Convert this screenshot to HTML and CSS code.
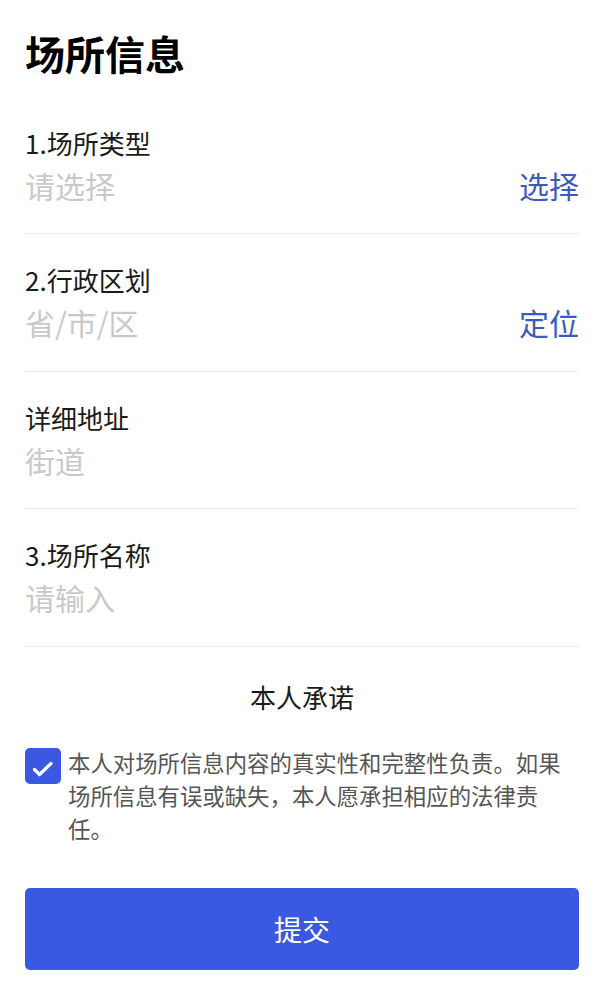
FILE: index.html
```html
<!DOCTYPE html>
<html lang="zh-CN">
<head>
    <meta charset="UTF-8">
    <meta name="viewport" content="width=device-width, initial-scale=1.0">
    <title>场所信息</title>
    <link rel="stylesheet" href="styles.css">
</head>
<body>

    <div class="page">
        <h1 class="title">场所信息</h1>

        <div class="field">
            <div class="label">1.场所类型</div>
            <div class="value">
                <span class="placeholder">请选择</span>
                <span class="action">选择</span>
            </div>
        </div>

        <div class="field">
            <div class="label">2.行政区划</div>
            <div class="value">
                <span class="placeholder">省/市/区</span>
                <span class="action">定位</span>
            </div>
        </div>

        <div class="field">
            <div class="label">详细地址</div>
            <div class="value">
                <span class="placeholder">街道</span>
            </div>
        </div>

        <div class="field">
            <div class="label">3.场所名称</div>
            <div class="value">
                <span class="placeholder">请输入</span>
            </div>
        </div>

        <div class="promise-title">本人承诺</div>

        <div class="promise">
            <span class="checkbox">
                <svg viewBox="0 0 36 36" width="36" height="36">
                    <path d="M9.5 21.5 L14.5 26.5 L26 15.5" fill="none" stroke="#fff" stroke-width="3.2" stroke-linecap="round" stroke-linejoin="round"/>
                </svg>
            </span>
            <p class="promise-text">本人对场所信息内容的真实性和完整性负责。如果场所信息有误或缺失，本人愿承担相应的法律责任。</p>
        </div>

        <button class="submit">提交</button>
    </div>

</body>
</html>
```

FILE: styles.css
```css
body { margin: 0; background: #fff; font-family: "Noto Sans CJK SC", "Noto Sans", sans-serif; color: #1a1a1a; }
.page { padding: 25px 33px 21px 25px; }
.title { margin: 0 0 16px; font-size: 40px; line-height: 56px; font-weight: bold; color: #000; }
.field { padding: 28px 0 28px; border-bottom: 1px solid #ececec; }
.field:nth-child(odd) { padding-bottom: 29px; }
.label { font-size: 26px; line-height: 36px; color: #1a1a1a; }
.value { display: flex; justify-content: space-between; margin-top: 4px; font-size: 30px; line-height: 40px; }
.placeholder { color: #c9c9c9; }
.action { color: #3a5bbd; }
.promise-title { margin-top: 32px; text-align: center; font-size: 26px; line-height: 36px; color: #1a1a1a; }
.promise { display: flex; align-items: flex-start; gap: 7px; margin-top: 31px; }
.checkbox { flex: none; width: 36px; height: 36px; margin-top: 2px; background: #3a58e2; border-radius: 5px; }
.checkbox svg { display: block; }
.promise-text { margin: 0; padding-right: 12px; font-size: 22.4px; line-height: 33px; color: #555; }
.submit { display: block; width: 100%; height: 82px; margin-top: 43px; background: #3a58e2; color: #fff; border: none; border-radius: 5px; font-family: inherit; font-size: 28px; }
```
